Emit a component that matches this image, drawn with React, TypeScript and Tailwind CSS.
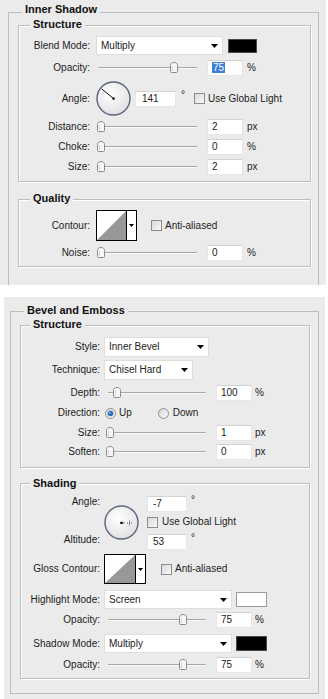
import React from 'react';

type Kids = { children?: React.ReactNode; className?: string };

function Title({ children, className = '' }: Kids) {
  return (
    <div className={`w-fit h-[13px] px-[3px] bg-[#ebebeb] text-[11px] leading-[13px] font-bold text-[#111] ${className}`}>
      {children}
    </div>
  );
}

function Group({ children, className = '' }: Kids) {
  return (
    <div className={`border border-[#bdbdbd] shadow-[inset_1px_1px_0_#fff,1px_1px_0_#fff] ${className}`}>{children}</div>
  );
}

function Row({ children, className = '' }: Kids) {
  return <div className={`flex items-center ${className}`}>{children}</div>;
}

function Label({ children, className = '' }: Kids) {
  return <span className={`shrink-0 text-right whitespace-nowrap ${className}`}>{children}</span>;
}

function Arrow() {
  return (
    <svg width="7" height="4" viewBox="0 0 7 4">
      <path d="M0 0H7L3.5 4Z" fill="#000" />
    </svg>
  );
}

function Select({ text, className = '' }: { text: string; className?: string }) {
  return (
    <div className={`flex items-center justify-between bg-white border border-[#dedede] pl-[4px] pr-[4px] shrink-0 ${className}`}>
      <span>{text}</span>
      <Arrow />
    </div>
  );
}

function Field({ children, className = '' }: Kids) {
  return (
    <div className={`h-[16px] bg-white border border-[#e6e6e6] border-t-[#d2d2d2] pl-[4px] leading-[14px] shrink-0 ${className}`}>
      {children}
    </div>
  );
}

function Thumb() {
  return (
    <svg width="8" height="11" viewBox="0 0 8 11">
      <path
        d="M0.5 3.5C0.5 1.5 2 0.5 4 0.5S7.5 1.5 7.5 3.5V9.5C7.5 10.1 7.1 10.5 6.5 10.5H1.5C0.9 10.5 0.5 10.1 0.5 9.5Z"
        fill="#f7f7f7"
        stroke="#8a8a8a"
      />
      <path d="M2.5 4v5" stroke="#d4d4d4" />
    </svg>
  );
}

function Slider({ pos, className = '' }: { pos: number; className?: string }) {
  return (
    <div className={`relative h-[16px] shrink-0 ${className}`}>
      <div className="absolute left-[2px] right-0 top-[7px] h-px bg-[#a8a8a8]" />
      <div className="absolute left-[2px] right-0 top-[8px] h-px bg-[#fafafa]" />
      <div className="absolute top-[2px] leading-none" style={{ left: pos }}>
        <Thumb />
      </div>
    </div>
  );
}

function Check({ className = '' }: { className?: string }) {
  return (
    <div className={`w-[11px] h-[11px] shrink-0 border border-[#8c8c8c] bg-gradient-to-br from-[#d9d9d9] to-[#f9f9f9] ${className}`} />
  );
}

function Radio({ on }: { on?: boolean }) {
  return (
    <svg width="11" height="11" viewBox="0 0 11 11" className="shrink-0">
      <defs>
        <linearGradient id={on ? 'ron' : 'roff'} x1="0" y1="0" x2="1" y2="1">
          <stop offset="0" stopColor="#d6d6d6" />
          <stop offset="1" stopColor="#fbfbfb" />
        </linearGradient>
      </defs>
      <circle cx="5.5" cy="5.5" r="5" fill={`url(#${on ? 'ron' : 'roff'})`} stroke="#8e8e8e" />
      {on && <circle cx="5.5" cy="5.5" r="2.8" fill="#2d6cb8" />}
      {on && <circle cx="4.8" cy="4.8" r="1" fill="#8dbbef" />}
    </svg>
  );
}

function Dial({ id, children }: { id: string; children?: React.ReactNode }) {
  return (
    <svg width="35" height="35" viewBox="0 0 35 35" className="shrink-0">
      <defs>
        <radialGradient id={id} cx="40%" cy="35%" r="70%">
          <stop offset="0" stopColor="#ffffff" />
          <stop offset="1" stopColor="#e0e0e2" />
        </radialGradient>
      </defs>
      <circle cx="17.5" cy="17.5" r="16.5" fill={`url(#${id})`} stroke="#5b667c" strokeWidth="1.4" />
      {children}
    </svg>
  );
}

function Contour({ className = '' }: { className?: string }) {
  return (
    <div className={`flex shrink-0 border border-black bg-white ${className}`}>
      <svg viewBox="0 0 30 30" preserveAspectRatio="none" className="h-full flex-1">
        <path d="M0 30L30 0V30Z" fill="#989898" />
      </svg>
      <div className="w-[10px] border-l border-black flex items-center justify-center">
        <svg width="5" height="3" viewBox="0 0 5 3">
          <path d="M0 0H5L2.5 3Z" fill="#000" />
        </svg>
      </div>
    </div>
  );
}

export default function App() {
  return (
    <div className="min-h-[699px] bg-white text-[10px] leading-[14px] text-[#1c1c1c] font-['Liberation_Sans',Arial,sans-serif]">
      {/* Inner Shadow */}
      <div className="w-[326px] h-[285px] bg-[#ebebeb] pt-[12px] overflow-hidden">
        <div className="ml-[8px] w-[311px] h-[280px] border border-b-0 border-[#bdbdbd]">
          <Title className="-mt-[10px] ml-[13px]">Inner Shadow</Title>

          <Group className="ml-[9px] mt-[9px] w-[293px] pb-[6px]">
            <Title className="-mt-[8px] ml-[11px]">Structure</Title>

            <Row className="mt-[5px] h-[19px]">
              <Label className="w-[71px]">Blend Mode:</Label>
              <Select text="Multiply" className="ml-[6px] w-[127px] h-[19px]" />
              <div className="ml-[5px] w-[29px] h-[14px] bg-black border border-[#4a4a4a]" />
            </Row>

            <Row className="mt-[5px] h-[16px]">
              <Label className="w-[71px]">Opacity:</Label>
              <Slider pos={74} className="ml-[6px] w-[101px]" />
              <Field className="ml-[10px] w-[36px] border-[#c9d6e6]">
                <span className="bg-[#3b7fd6] text-white px-px">75</span>
              </Field>
              <span className="ml-[4px]">%</span>
            </Row>

            <Row className="mt-[5px] h-[35px]">
              <Label className="w-[71px]">Angle:</Label>
              <div className="ml-[6px]">
                <Dial id="d1">
                  <line x1="17.5" y1="17.5" x2="5.6" y2="7.9" stroke="#111" strokeWidth="1" />
                  <rect x="16.5" y="16.5" width="2.2" height="2.2" fill="#000" />
                </Dial>
              </div>
              <Field className="ml-[4px] w-[41px] pl-[6px]">141</Field>
              <span className="ml-[5px] mb-[7px]">°</span>
              <Check className="ml-[9px]" />
              <span className="ml-[3px]">Use Global Light</span>
            </Row>

            <Row className="mt-[3px] h-[16px]">
              <Label className="w-[71px]">Distance:</Label>
              <Slider pos={1} className="ml-[6px] w-[101px]" />
              <Field className="ml-[10px] w-[36px]">2</Field>
              <span className="ml-[4px]">px</span>
            </Row>

            <Row className="mt-[4px] h-[16px]">
              <Label className="w-[71px]">Choke:</Label>
              <Slider pos={1} className="ml-[6px] w-[101px]" />
              <Field className="ml-[10px] w-[36px]">0</Field>
              <span className="ml-[4px]">%</span>
            </Row>

            <Row className="mt-[4px] h-[16px]">
              <Label className="w-[71px]">Size:</Label>
              <Slider pos={1} className="ml-[6px] w-[101px]" />
              <Field className="ml-[10px] w-[36px]">2</Field>
              <span className="ml-[4px]">px</span>
            </Row>
          </Group>

          <Group className="ml-[9px] mt-[17px] w-[293px] pb-[5px]">
            <Title className="-mt-[8px] ml-[11px]">Quality</Title>

            <Row className="mt-[5px] h-[31px]">
              <Label className="w-[71px]">Contour:</Label>
              <Contour className="ml-[6px] w-[41px] h-[31px]" />
              <Check className="ml-[14px]" />
              <span className="ml-[3px]">Anti-aliased</span>
            </Row>

            <Row className="mt-[4px] h-[16px]">
              <Label className="w-[71px]">Noise:</Label>
              <Slider pos={1} className="ml-[6px] w-[101px]" />
              <Field className="ml-[10px] w-[36px]">0</Field>
              <span className="ml-[4px]">%</span>
            </Row>
          </Group>
        </div>
      </div>

      {/* Bevel and Emboss */}
      <div className="ml-[4px] mt-[12px] w-[321px] h-[402px] bg-[#ebebeb] pt-[14px]">
        <div className="ml-[6px] w-[309px] border border-[#bdbdbd] pb-[14px]">
          <Title className="-mt-[8px] ml-[13px]">Bevel and Emboss</Title>

          <Group className="ml-[9px] mt-[8px] w-[290px] pb-[7px]">
            <Title className="-mt-[8px] ml-[9px]">Structure</Title>

            <Row className="mt-[6px] h-[20px]">
              <Label className="w-[79px]">Style:</Label>
              <Select text="Inner Bevel" className="ml-[4px] w-[105px] h-[20px]" />
            </Row>

            <Row className="mt-[3px] h-[20px]">
              <Label className="w-[79px]">Technique:</Label>
              <Select text="Chisel Hard" className="ml-[4px] w-[89px] h-[20px]" />
            </Row>

            <Row className="mt-[5px] h-[16px]">
              <Label className="w-[79px]">Depth:</Label>
              <Slider pos={7} className="ml-[6px] w-[100px]" />
              <Field className="ml-[10px] w-[36px]">100</Field>
              <span className="ml-[3px]">%</span>
            </Row>

            <Row className="mt-[4px] h-[16px]">
              <Label className="w-[79px]">Direction:</Label>
              <div className="ml-[5px] flex items-center">
                <Radio on />
                <span className="ml-[3px]">Up</span>
              </div>
              <div className="ml-[26px] flex items-center">
                <Radio />
                <span className="ml-[4px]">Down</span>
              </div>
            </Row>

            <Row className="mt-[4px] h-[16px]">
              <Label className="w-[79px]">Size:</Label>
              <Slider pos={0} className="ml-[6px] w-[100px]" />
              <Field className="ml-[10px] w-[36px]">1</Field>
              <span className="ml-[3px]">px</span>
            </Row>

            <Row className="mt-[3px] h-[16px]">
              <Label className="w-[79px]">Soften:</Label>
              <Slider pos={0} className="ml-[6px] w-[100px]" />
              <Field className="ml-[10px] w-[36px]">0</Field>
              <span className="ml-[3px]">px</span>
            </Row>
          </Group>

          <Group className="ml-[9px] mt-[15px] w-[290px] pb-[5px]">
            <Title className="-mt-[7px] ml-[9px]">Shading</Title>

            <div className="mt-[5px] flex items-start">
              <div className="w-[79px] shrink-0 flex flex-col items-end">
                <span className="h-[14px]">Angle:</span>
                <span className="mt-[24px] h-[14px]">Altitude:</span>
              </div>
              <div className="ml-[4px] mt-[10px]">
                <Dial id="d2">
                  <rect x="16.3" y="16.8" width="2.4" height="2.2" fill="#000" />
                  <rect x="19.4" y="17.4" width="1" height="1" fill="#000" />
                  <path d="M25.5 15.5v5M23 18h5" stroke="#333" strokeWidth="0.8" strokeDasharray="1 1" />
                </Dial>
              </div>
              <div className="ml-[8px] pt-[1px] flex flex-col">
                <div className="flex items-center h-[15px]">
                  <Field className="w-[40px] h-[15px] pl-[5px] leading-[13px]">-7</Field>
                  <span className="ml-[4px] mb-[7px]">°</span>
                </div>
                <div className="mt-[4px] flex items-center h-[14px]">
                  <Check />
                  <span className="ml-[4px]">Use Global Light</span>
                </div>
                <div className="mt-[5px] flex items-center h-[15px]">
                  <Field className="w-[40px] h-[15px] pl-[5px] leading-[13px]">53</Field>
                  <span className="ml-[4px] mb-[7px]">°</span>
                </div>
              </div>
            </div>

            <Row className="mt-[5px] h-[30px]">
              <Label className="w-[79px]">Gloss Contour:</Label>
              <Contour className="ml-[4px] w-[42px] h-[30px]" />
              <Check className="ml-[15px]" />
              <span className="ml-[3px]">Anti-aliased</span>
            </Row>

            <Row className="mt-[6px] h-[19px]">
              <Label className="w-[79px]">Highlight Mode:</Label>
              <Select text="Screen" className="ml-[4px] w-[128px] h-[19px]" />
              <div className="ml-[4px] w-[31px] h-[15px] bg-white border border-[#9a9a9a]" />
            </Row>

            <Row className="mt-[3px] h-[16px]">
              <Label className="w-[79px]">Opacity:</Label>
              <Slider pos={73} className="ml-[6px] w-[100px]" />
              <Field className="ml-[10px] w-[36px]">75</Field>
              <span className="ml-[3px]">%</span>
            </Row>

            <Row className="mt-[6px] h-[19px]">
              <Label className="w-[79px]">Shadow Mode:</Label>
              <Select text="Multiply" className="ml-[4px] w-[128px] h-[19px]" />
              <div className="ml-[4px] w-[31px] h-[15px] bg-black border border-[#4a4a4a]" />
            </Row>

            <Row className="mt-[4px] h-[16px]">
              <Label className="w-[79px]">Opacity:</Label>
              <Slider pos={73} className="ml-[6px] w-[100px]" />
              <Field className="ml-[10px] w-[36px]">75</Field>
              <span className="ml-[3px]">%</span>
            </Row>
          </Group>
        </div>
      </div>
    </div>
  );
}
